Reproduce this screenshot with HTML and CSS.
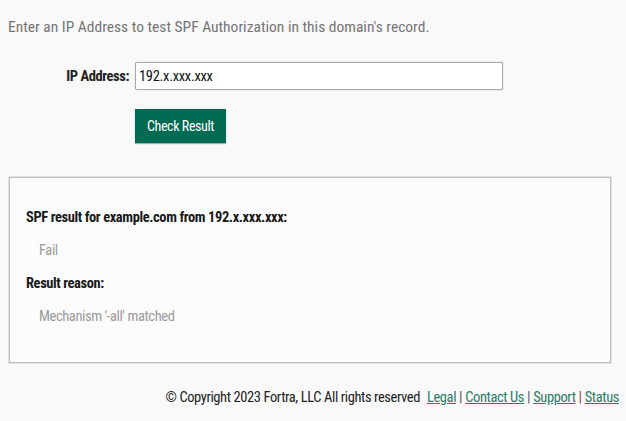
FILE: index.html
```html
<!DOCTYPE html>
<html lang="en">
<head>
<meta charset="utf-8">
<title>SPF Record Check</title>
<link rel="stylesheet" href="styles.css">
</head>
<body>
<main class="page">
  <p class="intro">Enter an IP Address to test SPF Authorization in this domain's record.</p>
  <form class="form">
    <label class="label" for="ip">IP Address:</label>
    <input class="input" id="ip" type="text" value="192.x.xxx.xxx">
    <span></span>
    <div class="actions"><button class="btn" type="button">Check Result</button></div>
  </form>
  <section class="result">
    <h4 class="result-title">SPF result for example.com from 192.x.xxx.xxx:</h4>
    <p class="result-value">Fail</p>
    <h4 class="result-title">Result reason:</h4>
    <p class="result-value">Mechanism '-all' matched</p>
  </section>
  <footer class="footer">
    <span class="copy">© Copyright 2023 Fortra, LLC All rights reserved</span>
    <a href="#">Legal</a><span class="sep">|</span><a href="#">Contact Us</a><span class="sep">|</span><a href="#">Support</a><span class="sep red">|</span><a href="#">Status</a>
  </footer>
</main>
</body>
</html>
```
FILE: styles.css
```css
html, body { margin: 0; padding: 0; }
body {
  background: #f9f9f9;
  font-family: "Roboto Condensed", Roboto, sans-serif;
  font-size: 14.5px;
  letter-spacing: -0.4px;
  color: #222;
}
.page { padding: 17px 7px 0 8px; }
.intro {
  margin: 0;
  font-size: 15.5px;
  letter-spacing: 0;
  line-height: 20px;
  color: #757575;
}
.form {
  display: grid;
  grid-template-columns: 121px 368px;
  column-gap: 6px;
  row-gap: 19px;
  margin-top: 25px;
  align-items: center;
}
.label {
  text-align: right;
  font-weight: bold;
  color: #222;
}
.input {
  box-sizing: border-box;
  height: 28px;
  margin: 0;
  padding: 0 0 0 3px;
  border: 1px solid #aaa;
  border-radius: 2px;
  background: #fff;
  font-family: "Roboto Condensed", Roboto, sans-serif;
  font-size: 14.5px;
  letter-spacing: -0.3px;
  color: #111;
  box-shadow: 0 0 1px #999;
}
.actions { display: flex; }
.btn {
  width: 91px;
  height: 34px;
  border: 0;
  border-radius: 0;
  background: #006a52;
  color: #fff;
  font-family: "Roboto Condensed", Roboto, sans-serif;
  font-size: 14px;
  letter-spacing: -0.4px;
  padding: 0;
  box-shadow: 0 1px 1px #aaa;
}
.result {
  box-sizing: border-box;
  width: 602px;
  height: 186px;
  margin: 34px 0 0 1px;
  padding: 30px 16px 0 16px;
  background: #fcfcfc;
  border: 1px solid #bdbdbd;
  box-shadow: 0 0 0 1px #e2e2e2;
}
.result-title {
  margin: 0;
  font-size: 14.5px;
  font-weight: bold;
  line-height: 20px;
  color: #1a1a1a;
}
.result-value {
  margin: 13px 0 13px 13px;
  line-height: 20px;
  color: #9a9a9a;
}
.footer {
  margin-top: 25px;
  text-align: right;
  line-height: 20px;
  color: #222;
}
.copy { margin-right: 4px; }
.footer a { color: #2b7d66; text-decoration: underline; }
.sep { margin: 0 3px; color: #555; }
.sep.red { color: #9b3b3b; }
```
